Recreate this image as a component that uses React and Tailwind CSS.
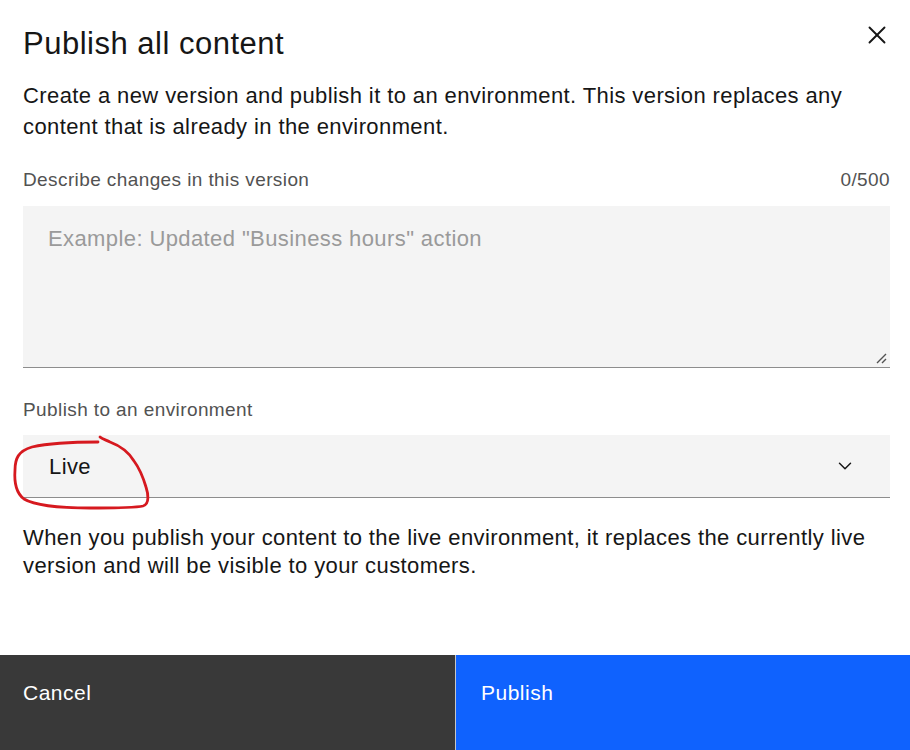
import React from 'react';
import { X, ChevronDown } from 'lucide-react';

const font = { fontFamily: '"Liberation Sans", Arial, sans-serif' };

export default function App() {
  return (
    <div className="w-[910px] h-[750px] bg-white flex flex-col text-[#161616]" style={font}>
      <div className="flex-1 flex flex-col pl-[23px] pr-[20px]">
        <div className="flex items-start justify-between pt-[26px]">
          <h2 className="text-[31px] leading-[36px] font-normal tracking-[0.5px]">Publish all content</h2>
          <button className="mt-[-10px] mr-[-6px] p-1 text-[#161616]">
            <X className="w-[30px] h-[30px]" strokeWidth={1.5} />
          </button>
        </div>

        <p className="mt-[18px] text-[22px] leading-[31px] tracking-[0.4px] pr-[30px]">
          Create a new version and publish it to an environment. This version replaces any content that is already in the environment.
        </p>

        <div className="mt-[26px] flex items-center justify-between text-[19px] leading-[24px] tracking-[0.4px] text-[#525252]">
          <span>Describe changes in this version</span>
          <span>0/500</span>
        </div>

        <div className="relative mt-[14px] h-[162px] bg-[#f4f4f4] border-b border-[#8d8d8d] px-[25px] pt-[19px]">
          <span className="text-[22px] leading-[28px] tracking-[0.4px] text-[#9a9a9a]">Example: Updated "Business hours" action</span>
          <svg className="absolute right-[2px] bottom-[2px]" width="14" height="14" viewBox="0 0 14 14">
            <path d="M3 12 L12 3 M8 12 L12 8" stroke="#525252" strokeWidth="1.4" />
          </svg>
        </div>

        <div className="mt-[30px] text-[19px] leading-[24px] tracking-[0.4px] text-[#525252]">Publish to an environment</div>

        <div className="relative mt-[13px] h-[63px] bg-[#f4f4f4] border-b border-[#8d8d8d] flex items-center justify-between pl-[26px] pr-[34px]">
          <span className="text-[22px] tracking-[0.4px]">Live</span>
          <ChevronDown className="w-[22px] h-[22px]" strokeWidth={1.6} />
          <svg className="absolute left-[-23px] top-[-10px]" width="170" height="95" viewBox="0 0 170 95" fill="none">
            <path
              d="M98 17 C75 17 50 18 32 22 C18 26 15 34 15 45 C14 58 16 68 24 74 C34 80 60 83 90 83 C115 83 135 83 143 81 C150 79 148 68 146 62 C143 52 140 44 134 36 C128 26 118 20 110 17 C106 15 102 14 100 12"
              stroke="#d6191f"
              strokeWidth="2.8"
              strokeLinecap="round"
              strokeLinejoin="round"
            />
          </svg>
        </div>

        <p className="mt-[26px] text-[22px] leading-[28px] tracking-[0.4px]">
          When you publish your content to the live environment, it replaces the currently live version and will be visible to your customers.
        </p>
      </div>

      <div className="h-[95px] flex">
        <button className="w-[455px] bg-[#393939] text-white text-[21px] tracking-[0.5px] text-left pl-[23px] pb-[20px] flex items-center">Cancel</button>
        <div className="w-px bg-[#c6c6c6]" />
        <button className="flex-1 bg-[#0f62fe] text-white text-[21px] tracking-[0.5px] text-left pl-[25px] pb-[20px] flex items-center">Publish</button>
      </div>
    </div>
  );
}
